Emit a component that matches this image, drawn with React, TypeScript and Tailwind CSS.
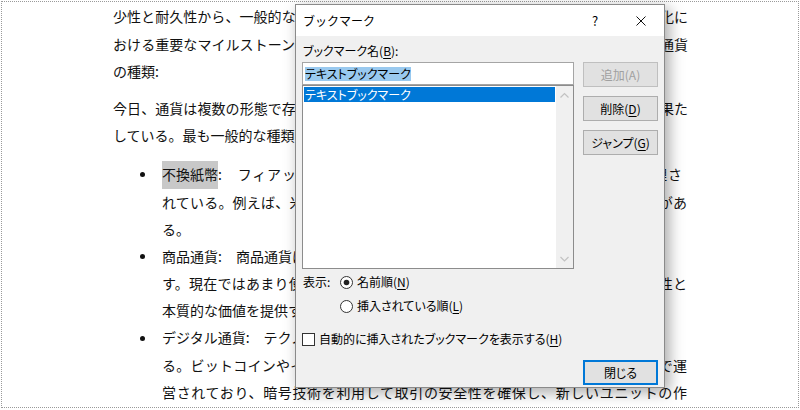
import React from "react";

const J = "h-[27.2px] leading-[27.2px] text-justify [text-align-last:justify]";
const L = "h-[27.2px] leading-[27.2px]";

function Bullet() {
  return (
    <div className="w-[49px] h-[27.2px] flex items-center shrink-0">
      <span className="ml-[27px] w-[5px] h-[5px] rounded-full bg-[#111]" />
    </div>
  );
}

function Radio({ checked }: { checked?: boolean }) {
  return (
    <svg width="13" height="13" viewBox="0 0 13 13" className="shrink-0">
      <circle cx="6.5" cy="6.5" r="6" fill="#fff" stroke="#333" strokeWidth="1" />
      {checked && <circle cx="6.5" cy="6.5" r="2.8" fill="#222" />}
    </svg>
  );
}

export default function App() {
  return (
    <div className="relative w-[800px] h-[410px] bg-white overflow-hidden font-['Noto_Sans_CJK_JP',sans-serif] text-[#111]">
      <div className="ml-[1px] mt-[1px] w-[798px] h-[407px] border border-dotted border-[#9a9a9a] pl-[111px] pt-[1.4px] text-[14px]">
        <div className="w-[575px]">
          <div className={J}>少性と耐久性から、一般的な交換手段としても広く受け入れられた。また、経済の近代化に</div>
          <div className={J}>おける重要なマイルストーンとなった。以下では、現代の社会で使用されている主要な通貨</div>
          <div className={L}>の種類:</div>
        </div>
        <div className="w-[575px] mt-[10px]">
          <div className={J}>今日、通貨は複数の形態で存在しており、それぞれが経済において重要で異なる役割を果た</div>
          <div className={L}>している。最も一般的な種類には、以下のようなものがある:</div>
        </div>
        <div className="mt-[12px] w-[575px]">
          <div className="flex">
            <Bullet />
            <div className="w-[525px]">
              <div className={`${J} w-[520px]`}>
                <span className="inline-block h-[27.2px] leading-[27.2px] bg-[#c8c8c8]">不換紙幣</span>:　フィアット通貨とも呼ばれ、政府によって発行され、法律で管理さ
              </div>
              <div className={J}>れている。例えば、米ドル、ユーロ、日本円などがこれに該当し、政府の信用があ</div>
              <div className={L}>る。</div>
            </div>
          </div>
          <div className="flex">
            <Bullet />
            <div className="w-[525px]">
              <div className={L}>商品通貨:　商品通貨は、金や銀などの実物資産に裏付けられた通貨で</div>
              <div className={J}>す。現在ではあまり使用されていないが、歴史的には重要な役割を担い、安定性と</div>
              <div className={L}>本質的な価値を提供する。</div>
            </div>
          </div>
          <div className="flex">
            <Bullet />
            <div className="w-[525px]">
              <div className={L}>デジタル通貨:　テクノロジーの進歩によって生まれた通貨であ</div>
              <div className={J}>る。ビットコインやイーサリアムなどが代表的であり、分散型ネットワーク上で運</div>
              <div className={J}>営されており、暗号技術を利用して取引の安全性を確保し、新しいユニットの作</div>
            </div>
          </div>
        </div>
      </div>

      {/* Dialog window */}
      <div className="absolute left-[295px] top-[4px] w-[370px] h-[384px] border border-[#8a8a8a] bg-[#f0f0f0] shadow-[4px_4px_14px_rgba(0,0,0,0.35)] text-[12px] text-black flex flex-col">
        <div className="h-[31px] bg-white flex items-center shrink-0">
          <div className="pl-[7px] flex-1 leading-[16px]">ブックマーク</div>
          <div className="w-[46px] h-full flex items-center justify-center text-[13px] leading-none">?</div>
          <div className="w-[46px] h-full flex items-center justify-center">
            <svg width="10" height="10" viewBox="0 0 10 10">
              <path d="M0.5 0.5 L9.5 9.5 M9.5 0.5 L0.5 9.5" stroke="#111" strokeWidth="1" />
            </svg>
          </div>
        </div>
        <div className="px-[6px] pt-[7px] flex flex-col [font-feature-settings:'palt']">
          <div className="pl-[1px] h-[16px] leading-[16px]">
            ブックマーク名(<span className="underline underline-offset-2">B</span>):
          </div>
          <div className="mt-[3px] flex gap-[9px]">
            <div className="w-[272px] flex flex-col">
              <div className="h-[23px] border border-[#a5a5a5] bg-white flex items-center pl-[2px]">
                <span className="bg-[#99c9ef] h-[14px] leading-[14px]">テキストブックマーク</span>
              </div>
              <div className="h-[184px] border border-[#8c8c8c] bg-white flex">
                <div className="flex-1 p-[1px]">
                  <div className="h-[15px] leading-[15px] bg-[#0078d7] text-white pl-[1px]">テキストブックマーク</div>
                </div>
                <div className="w-[17px] bg-[#f0f0f0] flex flex-col justify-between">
                  <svg width="17" height="17" viewBox="0 0 17 17">
                    <polyline points="4.5,11.5 8.5,7.5 12.5,11.5" fill="none" stroke="#c2c2c2" strokeWidth="1.2" />
                  </svg>
                  <svg width="17" height="17" viewBox="0 0 17 17">
                    <polyline points="4.5,6 8.5,10 12.5,6" fill="none" stroke="#c2c2c2" strokeWidth="1.2" />
                  </svg>
                </div>
              </div>
            </div>
            <div className="w-[75px] flex flex-col gap-[9px]">
              <div className="h-[25px] border border-[#bfbfbf] bg-[#e1e1e1] text-[#a0a0a0] flex items-center justify-center">
                追加(A)
              </div>
              <div className="h-[25px] border border-[#adadad] bg-[#e1e1e1] flex items-center justify-center">
                削除(<span className="underline underline-offset-2">D</span>)
              </div>
              <div className="h-[25px] border border-[#adadad] bg-[#e1e1e1] flex items-center justify-center">
                ジャンプ(<span className="underline underline-offset-2">G</span>)
              </div>
            </div>
          </div>
          <div className="mt-[5px] h-[16px] flex items-center">
            <div className="w-[38px] pl-[1px] leading-[16px]">表示:</div>
            <Radio checked />
            <span className="ml-[4px] leading-[16px]">
              名前順(<span className="underline underline-offset-2">N</span>)
            </span>
          </div>
          <div className="mt-[8px] h-[16px] flex items-center pl-[38px]">
            <Radio />
            <span className="ml-[4px] leading-[16px]">
              挿入されている順(<span className="underline underline-offset-2">L</span>)
            </span>
          </div>
          <div className="mt-[17px] h-[16px] flex items-center">
            <div className="w-[13px] h-[13px] border border-[#333] bg-white shrink-0" />
            <span className="ml-[4px] leading-[16px]">
              自動的に挿入されたブックマークを表示する(<span className="underline underline-offset-2">H</span>)
            </span>
          </div>
          <div className="mt-[13px] flex justify-end">
            <div className="w-[75px] h-[25px] border-2 border-[#0078d7] bg-[#e1e1e1] flex items-center justify-center">
              閉じる
            </div>
          </div>
        </div>
      </div>
    </div>
  );
}
